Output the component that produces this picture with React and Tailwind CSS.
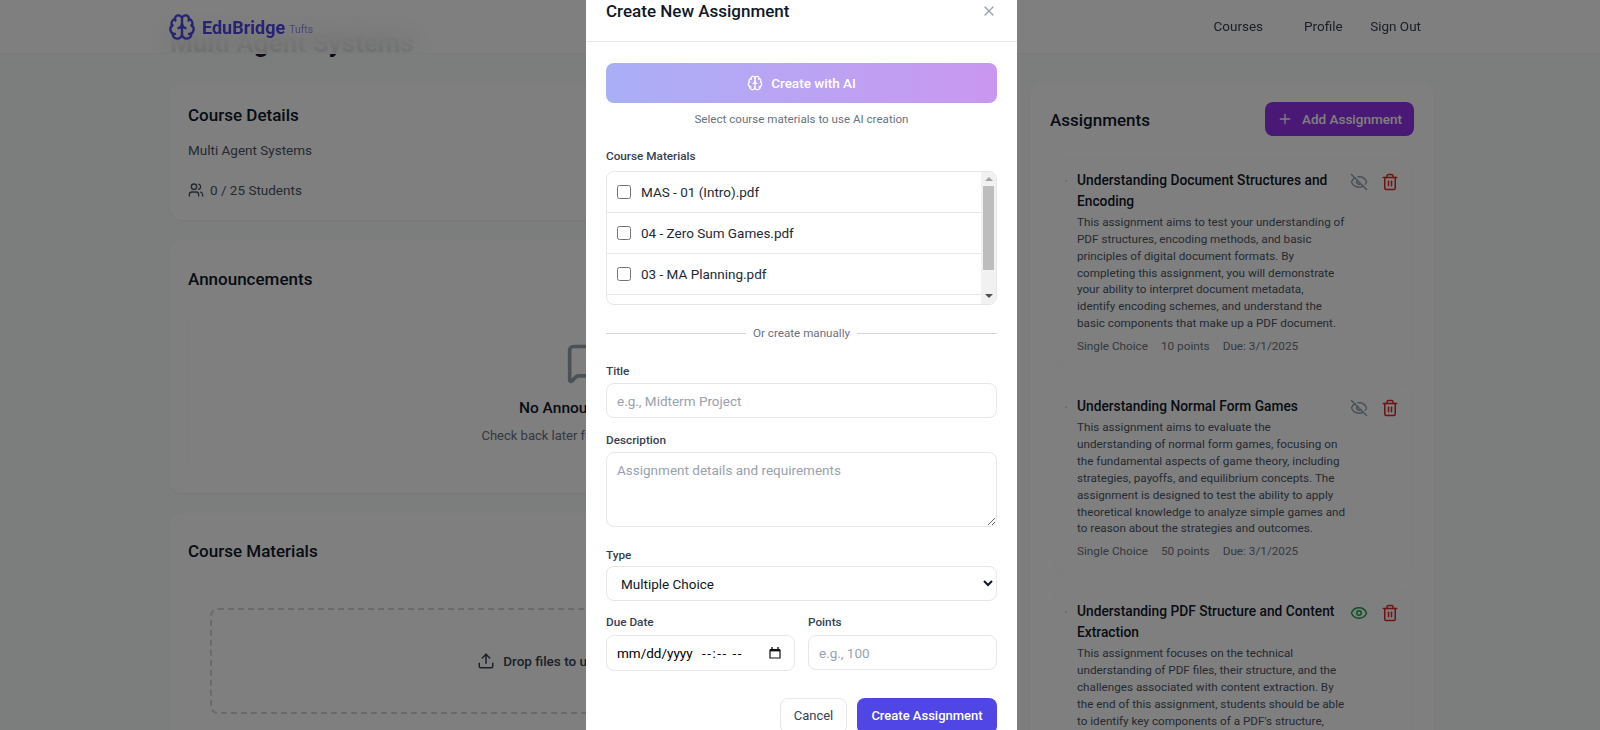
import React from 'react';
import { Brain, EyeOff, Eye, Trash2, Users, Upload, Plus, X, MessageSquare } from 'lucide-react';

const assignments = [
  {
    title: 'Understanding Document Structures and Encoding',
    description:
      'This assignment aims to test your understanding of PDF structures, encoding methods, and basic principles of digital document formats. By completing this assignment, you will demonstrate your ability to interpret document metadata,\nidentify encoding schemes, and understand the basic components that make up a PDF document.',
    type: 'Single Choice',
    points: 10,
    visible: false,
  },
  {
    title: 'Understanding Normal Form Games',
    description:
      'This assignment aims to evaluate the\nunderstanding of normal form games, focusing on the fundamental aspects of game theory, including strategies, payoffs, and equilibrium concepts. The assignment is designed to test the ability to apply theoretical knowledge to analyze simple games and to reason about the strategies and outcomes.',
    type: 'Single Choice',
    points: 50,
    visible: false,
  },
  {
    title: 'Understanding PDF Structure and Content Extraction',
    description:
      "This assignment focuses on the technical understanding of PDF files, their structure, and the challenges associated with content extraction. By the end of this assignment, students should be able to identify key components of a PDF's structure,\nand explain how text is stored inside of them.",
    type: 'Single Choice',
    points: 25,
    visible: true,
  },
];

const materials = ['MAS - 01 (Intro).pdf', '04 - Zero Sum Games.pdf', '03 - MA Planning.pdf', '02 - Game Theory.pdf'];

const AssignmentItem = ({ item }) => (
  <div className="flex rounded-lg border border-gray-50 pt-[10px] pb-3 pl-[22px] pr-0 mb-[18px] relative">
    <span className="absolute left-[10px] top-[20px] w-[2px] h-[2px] rounded-full bg-gray-300"></span>
    <div className="w-[272px]">
      <h3 className="text-[13.75px] leading-[20.5px] font-medium text-gray-900">{item.title}</h3>
      <p className="mt-[3px] whitespace-pre-line text-[11.7px] leading-[16.85px] text-gray-600">{item.description}</p>
      <div className="mt-[6px] flex gap-[13px] text-[11.75px] leading-4 text-gray-500">
        <span>{item.type}</span>
        <span>{item.points} points</span>
        <span>Due: 3/1/2025</span>
      </div>
    </div>
    <div className="flex gap-[12.6px] ml-[1px] h-[24px] pt-[3px]">
      {item.visible ? (
        <Eye size={18} className="text-[#16a34a]" />
      ) : (
        <EyeOff size={18} className="text-gray-400" />
      )}
      <Trash2 size={18} className="text-[#dc2626]" />
    </div>
  </div>
);

const Label = ({ children }) => (
  <label className="block text-[11.75px] leading-[17px] font-medium text-gray-700">{children}</label>
);

const inputClass =
  'block w-full rounded-lg border border-gray-200 bg-white px-[10px] text-[13.5px] text-gray-900 placeholder:text-gray-400 outline-none';

export default function App() {
  return (
    <div className="relative h-[730px] overflow-hidden bg-gray-50 font-['Roboto',sans-serif]">
      {/* navbar sits over the scrolled page */}
      <header className="absolute top-0 left-0 right-0 z-10 h-[54px] border-b border-gray-100 bg-white/80 backdrop-blur-md flex items-center justify-between pl-[168px] pr-[179px]">
        <div className="flex items-center">
          <Brain size={28} className="text-[#4f46e5]" />
          <span className="ml-[6px] mt-px text-[18px] font-bold text-[#4f46e5]">EduBridge</span>
          <span className="ml-1 mt-[7px] text-[10.5px] text-[#4f46e5] opacity-60">Tufts</span>
        </div>
        <nav className="flex text-[13.5px] text-gray-700">
          <a className="mr-[41px]">Courses</a>
          <a className="mr-[27.5px]">Profile</a>
          <a>Sign Out</a>
        </nav>
      </header>

      <main className="pt-[25px] pl-[170px]">
        <h1 className="text-[26px] leading-9 font-bold text-gray-900">Multi Agent Systems</h1>
        <div className="mt-[22px] flex gap-[25px]">
          <div className="w-[835px] shrink-0">
            <section className="h-[137px] rounded-xl bg-white shadow-xs pt-5 px-[18px]">
              <h2 className="text-[17px] leading-6 font-medium text-gray-900">Course Details</h2>
              <p className="mt-[14px] text-[13.5px] leading-[18px] text-gray-600">Multi Agent Systems</p>
              <div className="mt-[22px] flex items-center gap-[6px] text-[13.5px] leading-[18px] text-gray-600">
                <Users size={16} />
                <span>0 / 25 Students</span>
              </div>
            </section>

            <section className="mt-5 h-[253px] rounded-xl bg-white shadow-xs pt-[27px] px-[18px]">
              <h2 className="text-[17px] leading-6 font-medium text-gray-900">Announcements</h2>
              <div className="mt-[19px] h-[164px] rounded-xl border border-gray-50 flex flex-col items-center pt-[30px]">
                <MessageSquare size={44} className="text-gray-400" />
                <h3 className="mt-[13px] text-[15.5px] leading-5 font-medium text-gray-900">No Announcements</h3>
                <p className="mt-[8px] text-[13px] leading-5 text-gray-500">Check back later for announcements</p>
              </div>
            </section>

            <section className="mt-5 h-[300px] rounded-xl bg-white shadow-xs pt-[26px] px-[18px]">
              <h2 className="text-[17px] leading-6 font-medium text-gray-900">Course Materials</h2>
              <div className="mt-[45px] mx-[22px] h-[106px] rounded-lg border-2 border-dashed border-gray-300 flex items-center justify-center gap-2 text-[13.5px] font-medium text-gray-700">
                <Upload size={18} />
                <span>Drop files to upload or click here</span>
              </div>
            </section>
          </div>

          <aside className="w-[404px] shrink-0 rounded-xl bg-white shadow-xs pt-[19px] pl-[20px] pr-5">
            <div className="flex items-center justify-between">
              <h2 className="text-[17px] font-medium text-gray-900 mt-1">Assignments</h2>
              <button className="h-[34px] w-[149px] rounded-lg bg-[#9333ea] flex items-center justify-center gap-[9px] text-[13.5px] font-medium text-white">
                <Plus size={16} />
                Add Assignment
              </button>
            </div>
            <div className="mt-[23px] ml-[4px] mr-[2px]">
              {assignments.map((a) => (
                <AssignmentItem key={a.title} item={a} />
              ))}
            </div>
          </aside>
        </div>
      </main>

      {/* modal backdrop */}
      <div className="absolute inset-0 z-20 bg-black/50 flex justify-center overflow-hidden">
        <div className="w-[431px] ml-[3px] shrink-0 h-[770px] -mt-[14px] bg-white px-5">
          <div className="-mx-5 px-5 h-[56px] border-b border-gray-200 flex items-start justify-between pt-[11px]">
            <h2 className="text-[17px] leading-[28px] font-medium text-gray-900">Create New Assignment</h2>
            <X size={16} className="mt-[6px] text-gray-400" />
          </div>

          <button className="mt-[21px] h-10 w-full rounded-lg bg-gradient-to-r from-[#a9aff6] to-[#c997ef] flex items-center justify-center gap-2 text-[13.5px] font-medium text-white">
            <Brain size={16} />
            Create with AI
          </button>
          <p className="mt-2 text-center text-[11.6px] leading-4 text-gray-500">Select course materials to use AI creation</p>

          <div className="mt-[21px]">
            <Label>Course Materials</Label>
          </div>
          <div className="mt-[6px] h-[134px] rounded-lg border border-gray-200 flex overflow-hidden">
            <div className="flex-1 overflow-hidden">
              {materials.map((m) => (
                <label key={m} className="flex h-[41px] items-center gap-[10px] border-b border-gray-200 pl-[10px] text-[13.5px] text-gray-800">
                  <input type="checkbox" className="w-[14px] h-[14px]" />
                  {m}
                </label>
              ))}
            </div>
            <div className="w-[15px] bg-[#f1f1f1] flex flex-col items-center">
              <span className="mt-[5px] w-0 h-0 border-x-[4px] border-x-transparent border-b-[4px] border-b-[#a3a3a3]"></span>
              <span className="mt-[5px] w-[11px] h-[84px] bg-[#bdbdbd]"></span>
              <span className="mt-[24px] w-0 h-0 border-x-[4px] border-x-transparent border-t-[4px] border-t-[#505050]"></span>
            </div>
          </div>

          <div className="mt-[20px] flex items-center gap-[7px]">
            <div className="flex-1 h-px bg-gray-300"></div>
            <span className="text-[11.65px] leading-4 text-gray-500">Or create manually</span>
            <div className="flex-1 h-px bg-gray-300"></div>
          </div>

          <div className="mt-[22px]">
            <Label>Title</Label>
            <input className={`${inputClass} mt-[3px] h-[35px]`} placeholder="e.g., Midterm Project" />
          </div>
          <div className="mt-[14px]">
            <Label>Description</Label>
            <textarea
              className={`${inputClass} mt-[3px] h-[75px] py-[7px]`}
              placeholder="Assignment details and requirements"
            ></textarea>
          </div>
          <div className="mt-[20px]">
            <Label>Type</Label>
            <select className={`${inputClass} mt-[2px] h-[35px]`} defaultValue="Multiple Choice">
              <option>Multiple Choice</option>
              <option>Single Choice</option>
            </select>
          </div>
          <div className="mt-[13px] grid grid-cols-2 gap-[13px]">
            <div>
              <Label>Due Date</Label>
              <div className="mt-[4px] h-[36px] rounded-lg border border-gray-200 bg-white pl-[10px] pr-[13px] flex items-center justify-between text-[13.5px] text-black">
                <span>
                  mm/dd/yyyy <span className="ml-[6px] tracking-[1.5px]">--:-- --</span>
                </span>
                <svg width="12" height="12" viewBox="0 0 12 12" fill="none">
                  <path d="M1 3h10v8H1z" stroke="#111" strokeWidth="1.2" />
                  <path d="M1 2h10v2.4H1z" fill="#111" />
                  <path d="M3 0v2 M9 0v2" stroke="#111" strokeWidth="1.4" />
                </svg>
              </div>
            </div>
            <div>
              <Label>Points</Label>
              <input className={`${inputClass} mt-[4px] h-[35px]`} placeholder="e.g., 100" />
            </div>
          </div>

          <div className="mt-[27px] flex justify-end gap-[10px]">
            <button className="h-9 w-[67px] rounded-lg border border-gray-200 text-[13px] text-gray-700">Cancel</button>
            <button className="h-9 w-[140px] rounded-lg bg-[#4f46e5] text-[13px] font-medium text-white">Create Assignment</button>
          </div>
        </div>
      </div>
    </div>
  );
}
